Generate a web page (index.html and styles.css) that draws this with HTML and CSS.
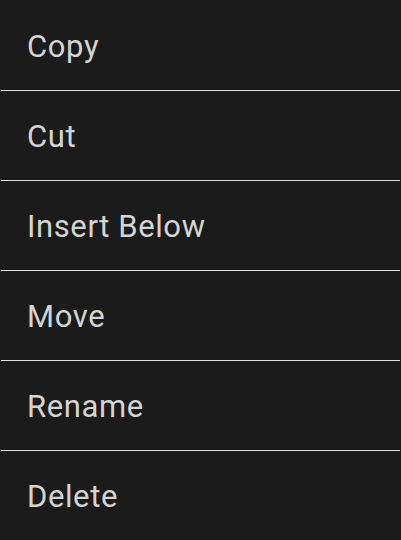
FILE: index.html
```html
<!DOCTYPE html>
<html>
<head>
<meta charset="utf-8">
<link rel="stylesheet" href="styles.css">
</head>
<body>
<ul class="menu">
  <li class="item">Copy</li>
  <li class="item">Cut</li>
  <li class="item">Insert Below</li>
  <li class="item">Move</li>
  <li class="item">Rename</li>
  <li class="item">Delete</li>
</ul>
</body>
</html>
```
FILE: styles.css
```css
html, body {
  margin: 0;
  padding: 0;
  background: #1b1b1b;
  height: 100%;
}
.menu {
  list-style: none;
  margin: 0;
  padding: 1px 0 0 0;
  display: flex;
  flex-direction: column;
}
.item {
  height: 87px;
  padding-top: 2px;
  display: flex;
  align-items: center;
  padding-left: 26px;
  margin: 0 1px 0 1px;
  border-bottom: 1px solid #e0e0e0;
  font-family: Roboto, sans-serif;
  font-size: 31px;
  font-weight: 400;
  letter-spacing: 0.6px;
  color: #d4d4d4;
  box-sizing: content-box;
}
```
